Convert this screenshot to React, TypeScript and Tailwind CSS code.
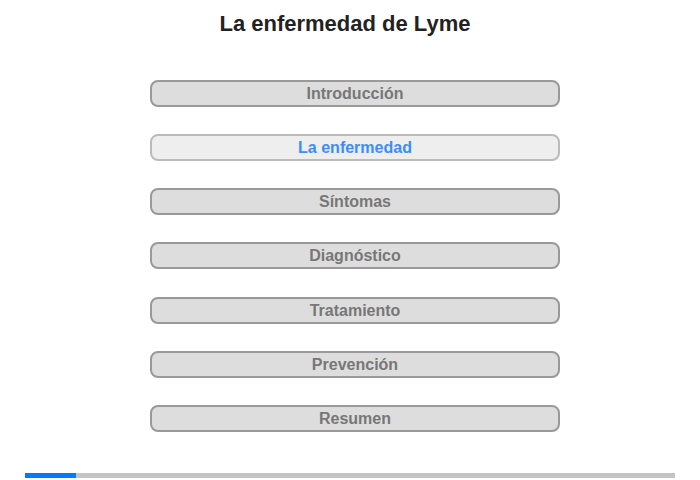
import React from "react";

const sections = [
	"Introducción",
	"La enfermedad",
	"Síntomas",
	"Diagnóstico",
	"Tratamiento",
	"Prevención",
	"Resumen",
];

export default function App() {
	const active = 1;
	return (
		<div className="flex h-[480px] w-[700px] flex-col items-center bg-white font-['Liberation_Sans',Arial,sans-serif]">
			<h1 className="mt-[11px] mr-[10px] text-[22px] leading-[26px] font-bold text-[#222]">
				La enfermedad de Lyme
			</h1>
			<div className="mt-[43px] ml-[10px] flex w-[410px] flex-col gap-[27px]">
				{sections.map((s, i) =>
					i === active ? (
						<div
							key={s}
							className="flex h-[27px] items-center justify-center rounded-[8px] border-2 border-[#bbb] bg-[#eee] text-[16px] font-bold text-[#3a8cff]"
						>
							{s}
						</div>
					) : (
						<div
							key={s}
							className={
								"flex h-[27px] items-center justify-center rounded-[8px] border-2 border-[#999] bg-[#ddd] text-[16px] font-bold text-[#777]" +
								(i === 4 ? " mt-[1px]" : "")
							}
						>
							{s}
						</div>
					),
				)}
			</div>
			<div className="mt-auto mb-[2px] flex h-[5px] w-[650px] bg-[#c4c4c4]">
				<div className="w-[51px] bg-[#007bff]" />
			</div>
		</div>
	);
}
